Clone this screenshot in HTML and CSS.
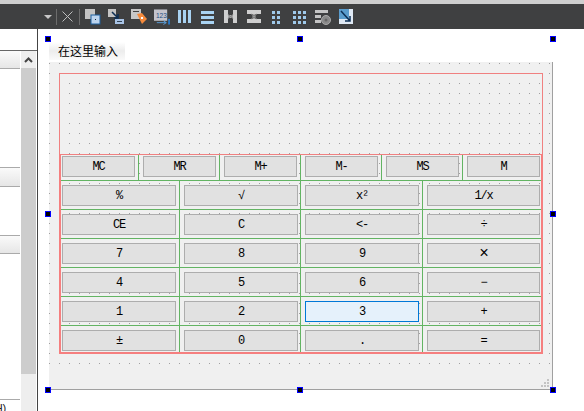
FILE: index.html
```html
<!DOCTYPE html>
<html lang="zh">
<head>
  <meta charset="UTF-8" />
  <title>Form Designer</title>
  <link rel="stylesheet" href="styles.css">
</head>
<body>
<div class="top-strip"></div>
<div class="toolbar">
  <span class="drop"></span>
  <span class="sep"></span>
  <svg class="tool-x" width="11" height="11" viewBox="0 0 11 11"><path d="M0.5 0.5L10.5 10.5M10.5 0.5L0.5 10.5" stroke="#bdbdbd" fill="none"/></svg>
  <span class="sep sep-b"></span>
  <div class="icons">
    <svg width="16" height="16" viewBox="0 0 16 16"><rect x="0" y="0" width="10" height="10" fill="#c4c4c4"/><rect x="6" y="6" width="9" height="9" fill="#bcd4ee" stroke="#1d5f9e"/><rect x="10" y="10" width="1" height="1" fill="#123"/></svg>
    <svg width="16" height="16" viewBox="0 0 16 16"><rect x="0" y="0" width="8" height="8" fill="#c4c4c4"/><path d="M4 3L10 9M10 5V9H6" stroke="#0d2f55" stroke-width="1.5" fill="none"/><rect x="7" y="10" width="9" height="5" fill="#a9c4e6"/><rect x="9" y="12" width="5" height="1" fill="#345"/></svg>
    <svg width="16" height="16" viewBox="0 0 16 16"><rect x="0" y="0" width="10" height="10" fill="#c8c8c8"/><rect x="2" y="2" width="6" height="1" fill="#444"/><path d="M6 5L11 4L16 10L11 15Z" fill="#f58a3c"/><rect x="10" y="8" width="2" height="2" fill="#fff"/></svg>
    <svg width="17" height="16" viewBox="0 0 17 16"><rect x="0" y="0" width="14" height="12" fill="#c4c4cc"/><text x="2" y="9" font-size="7" font-family="Liberation Sans" fill="#1d4f86">123</text><path d="M3 14H13M10 12L13 14L10 16" stroke="#5aa0dc" fill="none"/><rect x="15" y="10" width="2" height="6" fill="#2a78c4"/></svg>
    <svg width="16" height="16" viewBox="0 0 16 16"><path d="M1 1h3v13H1zM6 1h3v13H6zM11 1h3v13h-3z" fill="#a9d3f2"/></svg>
    <svg width="16" height="16" viewBox="0 0 16 16"><path d="M1 2h13v3H1zM1 7h13v3H1zM1 12h13v3H1z" fill="#a9d3f2"/></svg>
    <svg width="16" height="16" viewBox="0 0 16 16"><path d="M1 1h4v13H1zM10 1h4v13h-4z" fill="#cfcfcf"/><path d="M5 7.5h5" stroke="#a8a8a8" stroke-width="3"/><path d="M5 5l2 2.5L5 10M10 5L8 7.5L10 10" stroke="#777" fill="none"/></svg>
    <svg width="16" height="16" viewBox="0 0 16 16"><path d="M1 1h14v4H1zM1 10h14v4H1z" fill="#cfcfcf"/><path d="M8 5v5" stroke="#a8a8a8" stroke-width="3"/><path d="M5 5l3 2 3-2M5 10l3-2 3 2" stroke="#777" fill="none"/></svg>
    <svg width="16" height="16" viewBox="0 0 16 16"><path d="M3 2h3v3H3zM8 2h3v3H8zM3 7h3v3H3zM8 7h3v3H8zM3 12h3v3H3zM8 12h3v3H8z" fill="#9fc9ea"/></svg>
    <svg width="16" height="16" viewBox="0 0 16 16"><path d="M1 2h3v3H1zM6 2h3v3H6zM11 2h3v3h-3zM1 7h3v3H1zM6 7h3v3H6zM11 7h3v3h-3zM1 12h3v3H1zM6 12h3v3H6zM11 12h3v3h-3z" fill="#9fc9ea"/></svg>
    <svg width="16" height="16" viewBox="0 0 16 16"><path d="M0 1h13v3H0zM0 6h6v3H0zM0 11h6v3H0z" fill="#c4c4c4"/><circle cx="11" cy="11" r="4.5" fill="#8a8a8a" stroke="#aaa"/><circle cx="11" cy="11" r="1.5" fill="#666"/></svg>
    <svg width="14" height="16" viewBox="0 0 14 16"><rect width="14" height="15" fill="#dfe9f4"/><rect x="0" y="0" width="10" height="10" fill="#5a9ccd"/><path d="M2 2L11 12M11 7V12H6" stroke="#0d2f55" stroke-width="1.5" fill="none"/></svg>
  </div>
</div>

<div class="main">
  <aside class="side">
    <div class="side-top"></div>
    <div class="side-body">
      <div class="side-list">
        <div class="side-head side-head-1"></div>
        <div class="side-head side-head-2"></div>
        <div class="side-head side-head-3"></div>
        <div class="side-foot">(H)</div>
      </div>
      <div class="scrollbar">
        <div class="scroll-up"><svg width="9" height="6" viewBox="0 0 9 6"><path d="M1 5L4.5 1.5L8 5" stroke="#444" stroke-width="2" fill="none"/></svg></div>
        <div class="scroll-thumb"></div>
      </div>
    </div>
  </aside>

  <section class="canvas">
    <div class="design">
      <div class="tab-label">在这里输入</div>
      <div class="form">
        <div class="form-body">
          <div class="display"></div>
          <div class="pad">
            <div class="mem-row">
              <div class="cell"><button>MC</button></div>
              <div class="cell"><button>MR</button></div>
              <div class="cell"><button>M+</button></div>
              <div class="cell"><button>M-</button></div>
              <div class="cell"><button>MS</button></div>
              <div class="cell"><button>M</button></div>
            </div>
            <div class="key-grid">
              <div class="cell"><button>%</button></div>
              <div class="cell"><button>√</button></div>
              <div class="cell"><button>x²</button></div>
              <div class="cell"><button>1/x</button></div>
              <div class="cell"><button>CE</button></div>
              <div class="cell"><button>C</button></div>
              <div class="cell"><button>&lt;-</button></div>
              <div class="cell"><button>÷</button></div>
              <div class="cell"><button>7</button></div>
              <div class="cell"><button>8</button></div>
              <div class="cell"><button>9</button></div>
              <div class="cell"><button class="wide">×</button></div>
              <div class="cell"><button>4</button></div>
              <div class="cell"><button>5</button></div>
              <div class="cell"><button>6</button></div>
              <div class="cell"><button>−</button></div>
              <div class="cell"><button>1</button></div>
              <div class="cell"><button>2</button></div>
              <div class="cell"><button class="active">3</button></div>
              <div class="cell"><button>+</button></div>
              <div class="cell"><button>±</button></div>
              <div class="cell"><button>0</button></div>
              <div class="cell"><button>.</button></div>
              <div class="cell"><button>=</button></div>
            </div>
          </div>
        </div>
        <svg class="grip" width="9" height="9" viewBox="0 0 9 9"><path d="M6 0h2v2H6zM3 3h2v2H3zM6 3h2v2H6zM0 6h2v2H0zM3 6h2v2H3zM6 6h2v2H6z" fill="#c4c4c4"/></svg>
      </div>
      <span class="handle h-tl"></span>
      <span class="handle h-tc"></span>
      <span class="handle h-tr"></span>
      <span class="handle h-ml"></span>
      <span class="handle h-mr"></span>
      <span class="handle h-bl"></span>
      <span class="handle h-bc"></span>
      <span class="handle h-br"></span>
    </div>
  </section>
</div>
</body>
</html>
```

FILE: styles.css
```css
* { margin: 0; padding: 0; box-sizing: border-box; }
html, body { height: 100%; overflow: hidden; }
body { background: #fff; display: flex; flex-direction: column; font-family: 'Liberation Mono', monospace; }

.top-strip { height: 4px; background: #cfcfcf; flex: none; }
.toolbar { height: 25px; flex: none; background: #3f4041; display: flex; align-items: center; padding-left: 44px; }
.drop { width: 0; height: 0; border-left: 4px solid transparent; border-right: 4px solid transparent; border-top: 4px solid #c8c8c8; margin-top: 1px; }
.sep { width: 1px; height: 16px; background: #6c6c6c; margin-left: 4px; }
.tool-x { margin-left: 5px; }
.sep-b { margin-left: 6px; }
.icons { display: flex; gap: 7px; margin-left: 5px; align-items: center; }
.icons svg { width: 16px; flex: none; }

.main { flex: 1; display: flex; min-height: 0; }
.side { width: 38px; flex: none; border-right: 1px solid #444; display: flex; flex-direction: column; }
.side-top { height: 22px; border-bottom: 1px solid #666; flex: none; }
.side-body { flex: 1; display: flex; min-height: 0; }
.side-list { width: 21px; flex: none; position: relative; }
.side-head { position: absolute; left: 0; right: 1px; background: linear-gradient(#fafafa, #e6e6e6); border-top: 1px solid #aaa; border-bottom: 1px solid #aaa; }
.side-head-1 { top: 0; height: 18px; border-top: none; }
.side-head-2 { top: 116px; height: 20px; }
.side-head-3 { top: 184px; height: 19px; }
.side-foot { position: absolute; left: 0; right: 1px; top: 348px; height: 12px; padding-top: 2px; border-top: 1px solid #aaa; background: #fff; color: #222; font: 11px/12px 'Liberation Sans', sans-serif; text-indent: -9px; overflow: hidden; }
.scrollbar { width: 15px; flex: none; background: #eee; display: flex; flex-direction: column; }
.scroll-up { height: 17px; display: flex; align-items: center; justify-content: center; background: #eee; }
.scroll-thumb { height: 306px; background: #cdcdcd; }

.canvas { flex: 1; padding: 13px 0 0 11px; }
.design { position: relative; width: 504px; height: 348px; }
.tab-label { width: 76px; height: 18px; padding-left: 9px; font: 12px/18px 'Noto Sans CJK SC', sans-serif; color: #000; background: linear-gradient(#fff, #ececec 50%, #fafafa); }
.form { position: relative; margin-top: 2px; height: 328px; background: #f0f0f0; border-right: 1px solid #a0a0a0; border-bottom: 1px solid #a0a0a0; }
.form-body { height: 303px; padding: 11px 9px 0 10px; background-image: radial-gradient(circle at 0.5px 1.5px, #a0a0a0 0.8px, transparent 0.8px); background-size: 10px 10px; }
.display { height: 81px; border: 1px solid #f08080; border-bottom: none; }
.pad { border: 2px solid #f57f7f; border-top: 1px solid #f08080; width: 484px; }

.mem-row { display: grid; grid-template-columns: 78px repeat(4, 81px) 78px; grid-template-rows: 26px; }
.key-grid { display: grid; grid-template-columns: 119px 121px 122px 118px; grid-template-rows: repeat(5, 29px) 26px; }
.cell { display: flex; padding: 4px 3px 3px 4px; border-right: 1px solid #63b463; border-bottom: 1px solid #63b463; }
.mem-row .cell { padding-top: 1px; }
.mem-row .cell:first-child, .key-grid .cell:nth-child(4n+1) { padding-left: 1px; }
.mem-row .cell:last-child, .key-grid .cell:nth-child(4n) { border-right: none; padding-right: 1px; }
.key-grid .cell:nth-child(4n+2) { padding-right: 2px; }
.key-grid .cell:nth-last-child(-n+4) { border-bottom: none; padding-bottom: 1px; }

button { flex: 1; min-width: 0; border: 1px solid #adadad; background: #e1e1e1; color: #000; font: 12px 'Liberation Mono', monospace; letter-spacing: -1.2px; }
button.active { background: #e5f1fb; border-color: #0078d7; }
button.wide { font-size: 16px; }

.grip { position: absolute; right: 2px; bottom: 1px; }

.handle { position: absolute; width: 6px; height: 6px; background: #000; border: 1px solid #0000ff; }
.h-tl { left: -4px; top: -6px; }
.h-tc { left: 248px; top: -6px; }
.h-tr { right: -3px; top: -6px; }
.h-ml { left: -4px; top: 169px; }
.h-mr { right: -3px; top: 169px; }
.h-bl { left: -4px; bottom: -3px; }
.h-bc { left: 248px; bottom: -3px; }
.h-br { right: -3px; bottom: -3px; }
```
